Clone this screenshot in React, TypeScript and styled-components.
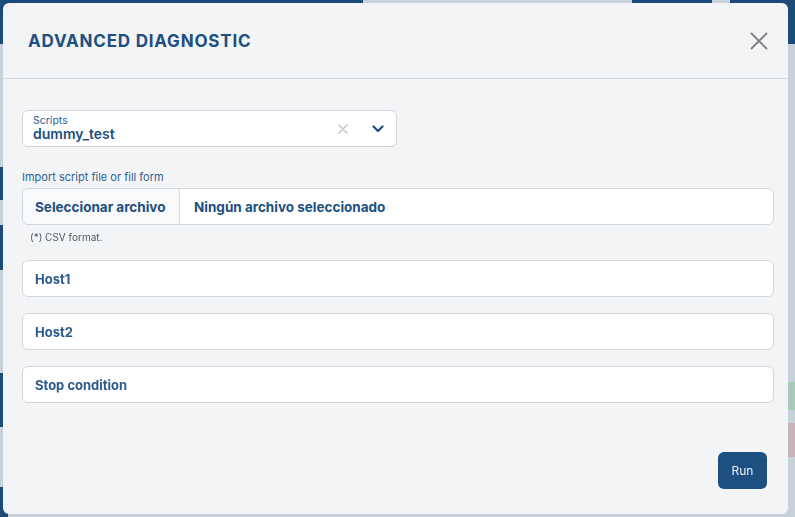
import React from "react";
import styled, { createGlobalStyle } from "styled-components";

const Global = createGlobalStyle`
  html, body { margin: 0; padding: 0; width: 100%; height: 100%; overflow: hidden; }
  body { background: #c6d1db; font-family: Inter, "Noto Sans", "Liberation Sans", sans-serif; }
  * { box-sizing: border-box; }
`;

const Page = styled.div`
  width: 795px;
  height: 517px;
  display: flex;
  flex-direction: column;
  background: #c6d1db;
`;

const TopBar = styled.div`
  height: 44px;
  display: flex;
`;

const BarSeg = styled.div<{ $w: number; $c: string }>`
  width: ${(p) => p.$w}px;
  background: ${(p) => p.$c};
`;

const PageBody = styled.div`
  flex: 1;
  display: flex;
  justify-content: space-between;
`;

const SideStrip = styled.div`
  width: 8px;
  display: flex;
  flex-direction: column;
`;

const StripSeg = styled.div<{ $h: number; $c: string }>`
  height: ${(p) => p.$h}px;
  background: ${(p) => p.$c};
`;

const Modal = styled.div`
  position: fixed;
  top: 3px;
  left: 3px;
  width: 785px;
  height: 511px;
  background: #f2f4f6;
  border-radius: 6px;
  display: flex;
  flex-direction: column;
`;

const Header = styled.div`
  height: 76px;
  flex-shrink: 0;
  display: flex;
  align-items: center;
  justify-content: space-between;
  padding: 0 17px 0 25px;
  border-bottom: 1px solid #d7dadd;
`;

const Title = styled.h2`
  margin: 0;
  font-size: 17px;
  font-weight: 700;
  letter-spacing: 0.8px;
  color: #1d4f80;
`;

const CloseBtn = styled.button`
  width: 24px;
  height: 24px;
  padding: 0;
  border: none;
  background: transparent;
  display: flex;
  align-items: center;
  justify-content: center;
`;

const Body = styled.div`
  flex: 1;
  display: flex;
  flex-direction: column;
  padding: 31px 14px 0 19px;
`;

const Box = styled.div`
  height: 37px;
  background: #ffffff;
  border: 1px solid #d3d6da;
  border-radius: 6px;
  display: flex;
  align-items: center;
`;

const SelectBox = styled(Box)`
  width: 375px;
  padding: 0 10px 0 10px;
`;

const SelectValue = styled.div`
  flex: 1;
  display: flex;
  flex-direction: column;
`;

const SmallLabel = styled.span`
  font-size: 10.5px;
  line-height: 11px;
  color: #2f5f91;
`;

const Value = styled.span`
  font-size: 14px;
  line-height: 16px;
  font-weight: 600;
  color: #1d4f80;
`;

const Indicators = styled.div`
  display: flex;
  align-items: center;
  gap: 24px;
  padding-right: 2px;
`;

const FieldLabel = styled.div`
  font-size: 11px;
  color: #2f5f91;
  margin: 23px 0 4px 0;
`;

const FileBox = styled(Box)`
  overflow: hidden;
`;

const FileButton = styled.div`
  height: 100%;
  width: 157px;
  display: flex;
  align-items: center;
  padding-left: 12px;
  background: #f8f9fa;
  border-right: 1px solid #dcdfe2;
  font-size: 13.5px;
  font-weight: 700;
  color: #1d4f80;
`;

const FileName = styled.div`
  padding-left: 14px;
  font-size: 13.5px;
  font-weight: 700;
  color: #1d4f80;
`;

const Hint = styled.div`
  font-size: 10px;
  color: #4b5a69;
  margin: 6px 0 0 8px;
`;

const InputList = styled.div`
  display: flex;
  flex-direction: column;
  gap: 16px;
  margin-top: 17px;
`;

const TextInput = styled(Box)`
  padding-left: 12px;
  font-size: 13px;
  font-weight: 700;
  color: #2b5a8c;
`;

const Footer = styled.div`
  display: flex;
  justify-content: flex-end;
  padding: 0 21px 25px 0;
`;

const RunButton = styled.button`
  width: 49px;
  height: 37px;
  border: none;
  border-radius: 6px;
  background: #1d5080;
  color: #eef2f6;
  font-family: Inter, "Noto Sans", sans-serif;
  font-size: 12px;
  font-weight: 400;
`;

export default function App() {
  return (
    <>
      <Global />
      <Page>
        <TopBar>
          <BarSeg $w={363} $c="#1c4b7a" />
          <BarSeg $w={269} $c="#c6d1db" />
          <BarSeg $w={80} $c="#1c4b7a" />
          <BarSeg $w={18} $c="#c6d1db" />
          <BarSeg $w={65} $c="#1c4b7a" />
        </TopBar>
        <PageBody>
          <SideStrip>
            <StripSeg $h={123} $c="#c6d1db" />
            <StripSeg $h={33} $c="#1c4b7a" />
            <StripSeg $h={25} $c="#c6d1db" />
            <StripSeg $h={45} $c="#1c4b7a" />
            <StripSeg $h={103} $c="#c6d1db" />
            <StripSeg $h={54} $c="#1c4b7a" />
            <StripSeg $h={60} $c="#c6d1db" />
            <StripSeg $h={30} $c="#1c4b7a" />
          </SideStrip>
          <SideStrip>
            <StripSeg $h={338} $c="#c6d1db" />
            <StripSeg $h={28} $c="#a9c9b7" />
            <StripSeg $h={13} $c="#c6d1db" />
            <StripSeg $h={34} $c="#c9b3bb" />
          </SideStrip>
        </PageBody>
      </Page>
      <Modal>
        <Header>
          <Title>ADVANCED DIAGNOSTIC</Title>
          <CloseBtn aria-label="close">
            <svg width="18" height="18" viewBox="0 0 18 18">
              <path d="M1.5 1.5 L16.5 16.5 M16.5 1.5 L1.5 16.5" stroke="#7d7f82" strokeWidth="1.8" strokeLinecap="round" />
            </svg>
          </CloseBtn>
        </Header>
        <Body>
          <SelectBox>
            <SelectValue>
              <SmallLabel>Scripts</SmallLabel>
              <Value>dummy_test</Value>
            </SelectValue>
            <Indicators>
              <svg width="10" height="10" viewBox="0 0 10 10">
                <path d="M1 1 L9 9 M9 1 L1 9" stroke="#c4c6c9" strokeWidth="1.6" strokeLinecap="round" />
              </svg>
              <svg width="12" height="8" viewBox="0 0 12 8">
                <path d="M1.5 1.5 L6 6 L10.5 1.5" stroke="#1d4f80" strokeWidth="2.2" fill="none" strokeLinecap="round" strokeLinejoin="round" />
              </svg>
            </Indicators>
          </SelectBox>
          <FieldLabel>Import script file or fill form</FieldLabel>
          <FileBox>
            <FileButton>Seleccionar archivo</FileButton>
            <FileName>Ningún archivo seleccionado</FileName>
          </FileBox>
          <Hint>(*) CSV format.</Hint>
          <InputList>
            <TextInput>Host1</TextInput>
            <TextInput>Host2</TextInput>
            <TextInput>Stop condition</TextInput>
          </InputList>
        </Body>
        <Footer>
          <RunButton>Run</RunButton>
        </Footer>
      </Modal>
    </>
  );
}
